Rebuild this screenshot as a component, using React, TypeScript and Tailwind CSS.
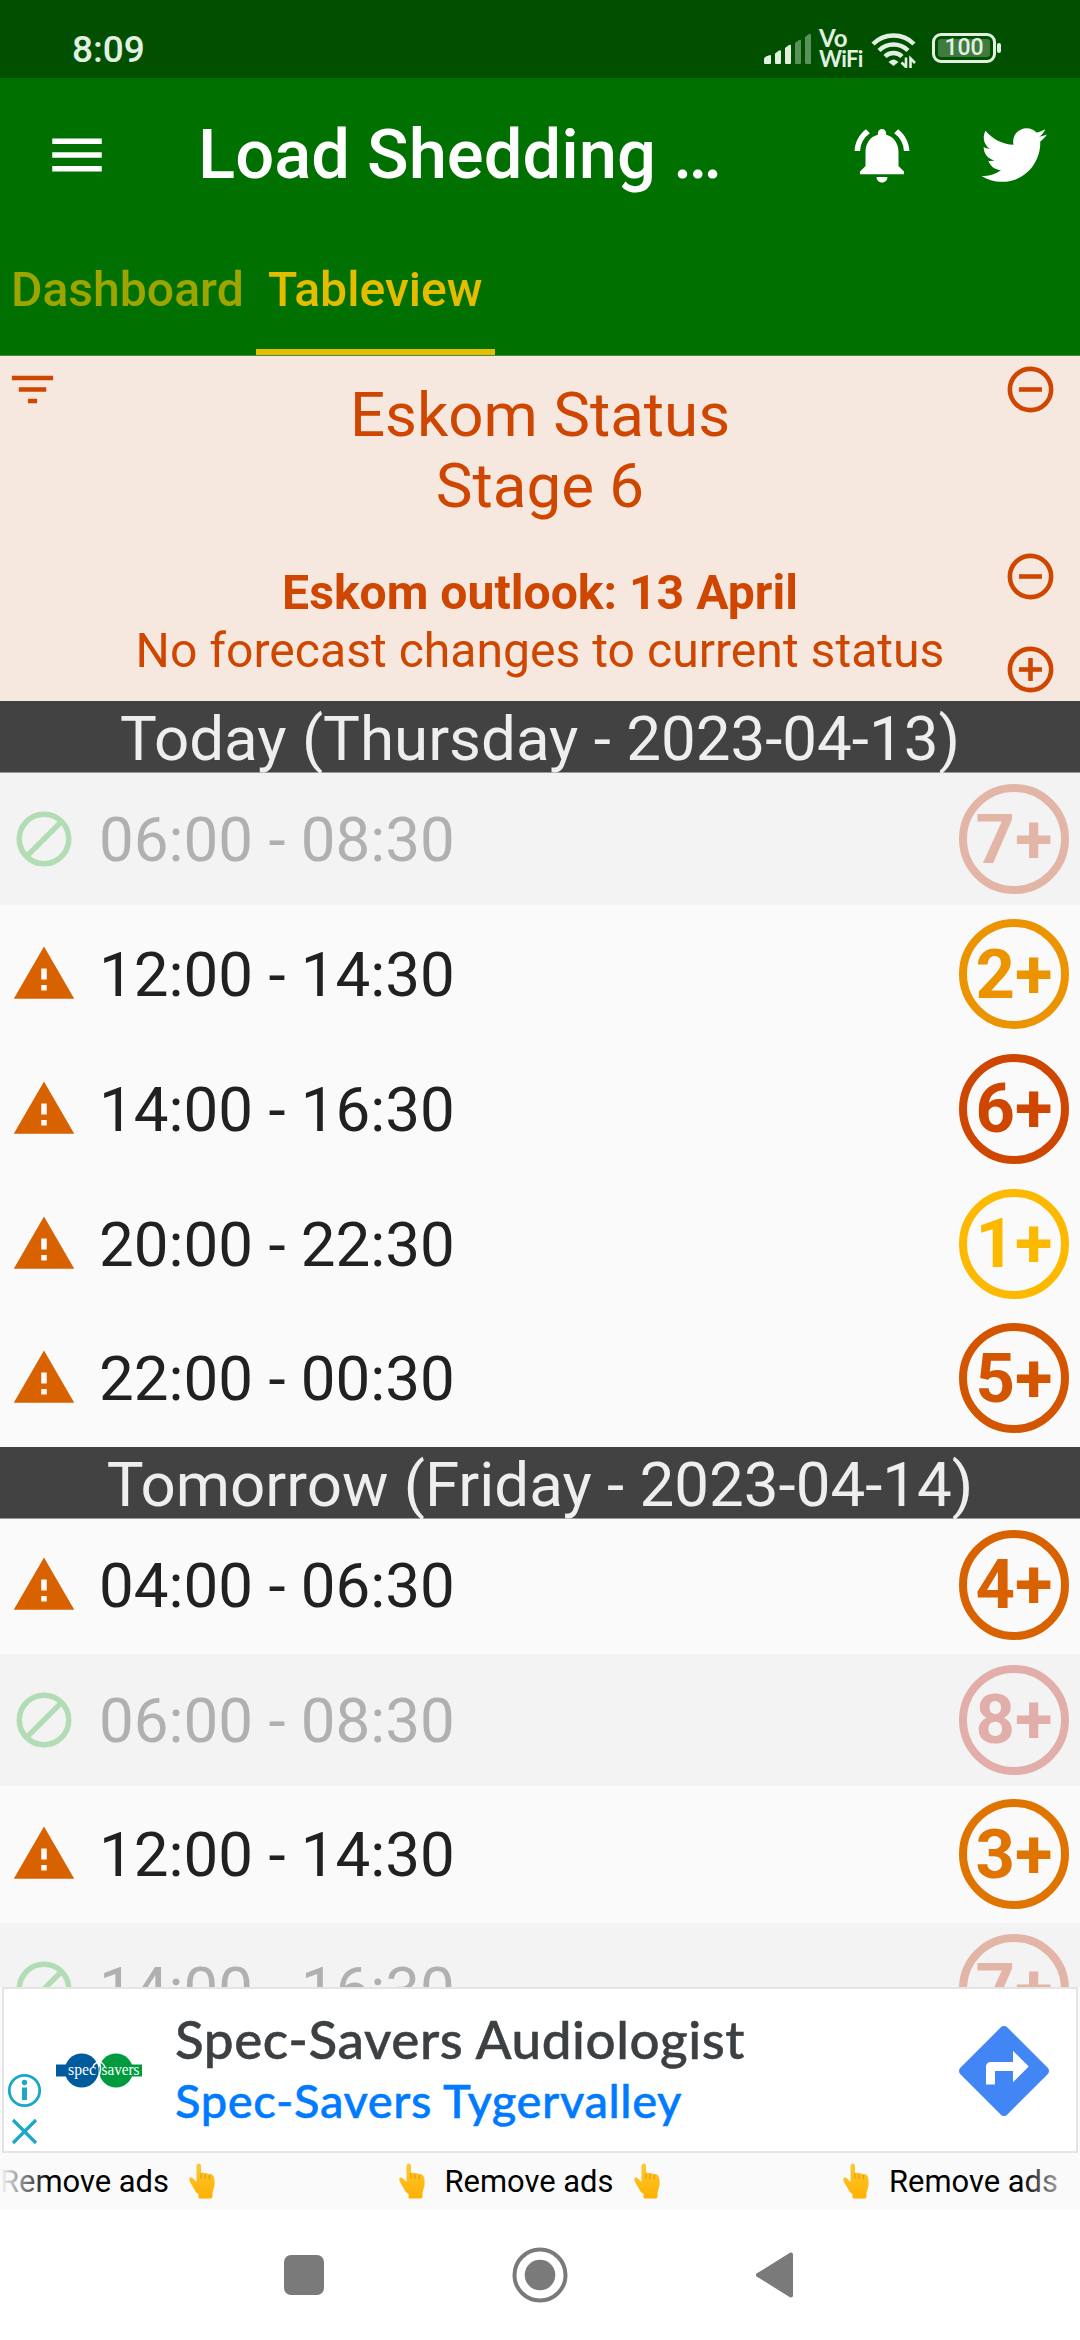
import { FaTwitter } from "react-icons/fa";
import { MdMenu, MdNotificationsActive } from "react-icons/md";

type Slot = {
    time: string;
    stage: string;
    color: string;
    active: boolean;
};

const today: Slot[] = [
    { time: "06:00 - 08:30", stage: "7+", color: "border-[#e3b5a6] text-[#e3b5a6]", active: false },
    { time: "12:00 - 14:30", stage: "2+", color: "border-[#eb9400] text-[#eb9400]", active: true },
    { time: "14:00 - 16:30", stage: "6+", color: "border-[#ce4600] text-[#ce4600]", active: true },
    { time: "20:00 - 22:30", stage: "1+", color: "border-[#fdb900] text-[#fdb900]", active: true },
    { time: "22:00 - 00:30", stage: "5+", color: "border-[#d35500] text-[#d35500]", active: true },
];

const tomorrow: Slot[] = [
    { time: "04:00 - 06:30", stage: "4+", color: "border-[#d96200] text-[#d96200]", active: true },
    { time: "06:00 - 08:30", stage: "8+", color: "border-[#e2aea9] text-[#e2aea9]", active: false },
    { time: "12:00 - 14:30", stage: "3+", color: "border-[#e07400] text-[#e07400]", active: true },
    { time: "14:00 - 16:30", stage: "7+", color: "border-[#e3b5a6] text-[#e3b5a6]", active: false },
];

function StatusBar() {
    return (
        <div className="h-[78px] bg-[#005000] flex items-start text-[#e2f0e2]">
            <span className="ml-[72px] mt-[28px] text-[37px] leading-[44px] font-medium">8:09</span>
            <svg className="ml-auto mt-[30px]" width="50" height="36" viewBox="0 0 50 36" fill="currentColor">
                <path d="M1 29q0-1.500 2-2.500l4-1.500q1 0 1 1v7q0 1-1 1H2q-1 0-1-1z" />
                <path d="M12 23.500l4-3q2-.8 2 1V33q0 1-1 1h-4q-1 0-1-1z" />
                <path d="M22 18l4-3q2-.8 2 1v17q0 1-1 1h-4q-1 0-1-1z" />
                <g opacity=".4">
                    <path d="M32 13l4-3q2-.8 2 1v22q0 1-1 1h-4q-1 0-1-1z" />
                    <path d="M42 7l4-3q2-.8 2 1v28q0 1-1 1h-4q-1 0-1-1z" />
                </g>
            </svg>
            <div className="ml-[6px] mt-[27px] w-[42px] font-['Lato'] font-bold">
                <div className="text-[24px] leading-[21px]">Vo</div>
                <div className="text-[22px] leading-[21px] tracking-[-0.7px]">WiFi</div>
            </div>
            <svg className="ml-[9px] mt-[30px]" width="50" height="38" viewBox="0 0 50 38" fill="none" stroke="currentColor" strokeWidth="4.400">
                <path d="M3 14a29 29 0 0 1 41 0" />
                <path d="M9 20.500a20.500 20.500 0 0 1 29 0" />
                <path d="M15 26.500a12 12 0 0 1 17 0" />
                <path d="M18.500 32q5-5 10 0l-5 4z" fill="currentColor" stroke="none" />
                <path d="M36 27.500v9.500l-4.500-4.500M40.500 38v-9.500l4.500 4.500" strokeWidth="2.600" />
            </svg>
            <div className="ml-[12px] mt-[33px] w-[64px] h-[30px] border-[3px] border-current rounded-[9px] p-[3px]">
                <div className="h-full rounded-[3px] bg-[#3f7b3f] flex items-center justify-center text-[23px] font-medium">100</div>
            </div>
            <div className="ml-[1px] mt-[43px] mr-[79px] w-[4px] h-[10px] rounded-[2px] bg-current" />
        </div>
    );
}

function Header() {
    return (
        <div className="h-[278px] bg-[#007000] border-b border-[#3f8f3c] flex flex-col">
            <div className="h-[154px] flex items-center text-white">
                <MdMenu size={66} className="ml-[44px]" />
                <div className="ml-[88px] w-[651px] text-[68.75px] font-medium whitespace-nowrap">Load Shedding …</div>
                <MdNotificationsActive size={66} />
                <FaTwitter size={66} className="ml-[66px]" />
            </div>
            <div className="flex-1 flex text-[48.125px] font-medium">
                <div className="w-[256px] pl-[11px] text-[#9fa500] flex items-center pb-[7px]">Dashboard</div>
                <div className="w-[239px] pl-[12px] text-[#e5bc00] flex items-center border-b-[6px] border-[#e5bc00] pb-px">Tableview</div>
            </div>
        </div>
    );
}

function CircleIcon({ plus = false, className = "" }: { plus?: boolean; className?: string }) {
    return (
        <svg className={className} width="55" height="55" viewBox="0 0 24 24" fill="none" stroke="currentColor" strokeWidth="2">
            <circle cx="12" cy="12" r="9" />
            <path d="M7 12h10" />
            {plus && <path d="M12 7v10" />}
        </svg>
    );
}

function EskomStatus() {
    return (
        <div className="h-[346px] bg-[#f6e7df] text-[#ce4600] flex justify-between">
            <div className="w-[77px] pl-[5px] pt-[6px]">
                <svg width="55" height="55" viewBox="0 0 24 24" fill="currentColor">
                    <path d="M10 18h4v-2h-4v2zM3 6v2h18V6H3zm3 7h12v-2H6v2z" />
                </svg>
            </div>
            <div className="text-center pt-[24px] whitespace-nowrap">
                <div className="text-[61.875px] leading-[71px]">Eskom Status</div>
                <div className="text-[61.875px] leading-[71px]">Stage 6</div>
                <div className="mt-[42px] text-[48.125px] leading-[58px] font-bold">Eskom outlook: 13 April</div>
                <div className="text-[48.125px] leading-[58px]">No forecast changes to current status</div>
            </div>
            <div className="w-[77px] flex flex-col pt-[6px]">
                <CircleIcon />
                <CircleIcon className="mt-[132px]" />
                <CircleIcon plus className="mt-[38px]" />
            </div>
        </div>
    );
}

function DayHeading({ children }: { children: React.ReactNode }) {
    return (
        <div className="h-[72px] bg-[#424242] border-b border-[#999] text-[#eee] text-[61.875px] leading-[76px] text-center whitespace-nowrap">
            {children}
        </div>
    );
}

function SlotRow({ slot }: { slot: Slot }) {
    return (
        <div className="h-[134.7px] shrink-0">
            <div className={`h-[132px] flex items-center px-[11px] ${slot.active ? "text-[#212121]" : "bg-[#f3f3f3] text-[#b0b0b0]"}`}>
                <svg
                    width="66"
                    height="66"
                    viewBox="0 0 24 24"
                    className={slot.active ? "text-[#d96200]" : "text-[#b2dcb4]"}
                >
                    {slot.active ? (
                        <path fill="currentColor" d="M1 21h22L12 2 1 21zm12-3h-2v-2h2v2zm0-4h-2v-4h2v4z" />
                    ) : (
                        <g fill="none" stroke="currentColor" strokeWidth="2">
                            <circle cx="12" cy="12" r="9" />
                            <path d="M5.600 18.400L18.400 5.600" />
                        </g>
                    )}
                </svg>
                <span className="ml-[22px] mt-[2px] text-[61.875px] leading-[72px]">{slot.time}</span>
                <div className={`ml-auto w-[110px] h-[110px] rounded-full border-[8px] flex items-center justify-center text-[68.75px] font-bold ${slot.color}`}>
                    {slot.stage}
                </div>
            </div>
        </div>
    );
}

function AdBanner() {
    return (
        <div className="mx-[2px] h-[166px] shrink-0 bg-white border-2 border-[#e3e4e3] flex">
            <div className="w-[50px] pt-[84px] pl-[3px] text-[#1ba8c8]">
                <svg width="36" height="72" viewBox="0 0 36 72" fill="none" stroke="currentColor" strokeWidth="2.800">
                    <circle cx="17.500" cy="17.500" r="15.200" />
                    <circle cx="17.500" cy="9.500" r="2.700" fill="currentColor" stroke="none" />
                    <path d="M17.500 14.500v12.500" strokeWidth="5" />
                    <path d="M6 47l23 23M29 47L6 70" strokeWidth="3.200" />
                </svg>
            </div>
            <svg className="mt-[62px] ml-[2px]" width="86" height="40" viewBox="0 0 86 40">
                <path fill="#005a9e" d="M0 13.500h12v12H0z" />
                <path fill="#009b3e" d="M74 13.500h12v12H74z" />
                <circle cx="25.700" cy="19.500" r="17" fill="#005a9e" />
                <circle cx="60" cy="19.500" r="17" fill="#009b3e" />
                <path d="M37 16q2-5 5.500-4t1 12M43 12q3-2 6 4" fill="none" stroke="#fff" strokeWidth="1.500" />
                <text x="12" y="24" fontSize="16" textLength="28" lengthAdjust="spacingAndGlyphs" fill="#fff" fontFamily="Liberation Serif, serif">spec</text>
                <text x="45.500" y="24" fontSize="16" textLength="38" lengthAdjust="spacingAndGlyphs" fill="#fff" fontFamily="Liberation Serif, serif">savers</text>
            </svg>
            <div className="ml-[33px] pt-[19px] font-['Lato'] font-medium whitespace-nowrap">
                <div className="text-[53px] leading-[62px] tracking-[0.55px] text-[#3c4043] [-webkit-text-stroke:0.5px_currentColor]">Spec-Savers Audiologist</div>
                <div className="mt-[2px] text-[47px] leading-[56px] tracking-[0.6px] text-[#007bff] [-webkit-text-stroke:0.5px_currentColor]">Spec-Savers Tygervalley</div>
            </div>
            <svg className="ml-auto mr-[18px] mt-[28px]" width="108" height="108" viewBox="0 0 24 24" fill="#4285f4">
                <path d="M21.710 11.290l-9-9a.996.996 0 0 0-1.410 0l-9 9a.996.996 0 0 0 0 1.410l9 9c.39.39 1.020.39 1.410 0l9-9a.996.996 0 0 0 0-1.410zM14 14.500V12h-4v3H8v-4c0-.55.45-1 1-1h5V7.500l3.500 3.500-3.500 3.500z" />
            </svg>
        </div>
    );
}

function Finger({ className = "" }: { className?: string }) {
    return (
        <svg className={`shrink-0 ${className}`} width="26" height="36" viewBox="0 0 26 36">
            <defs>
                <linearGradient id="skin" x1="0" y1="0" x2="0" y2="1">
                    <stop offset="0" stopColor="#fcc934" />
                    <stop offset="1" stopColor="#ffb000" />
                </linearGradient>
            </defs>
            <path
                fill="url(#skin)"
                d="M7.500 3Q7.500.5 9.800.5T12 3v7Q14 9 16 10.500q2.500-.8 4 .8 3-.8 4.500 1.700 1.500 3 1 9.500l-2 7v4q0 2-1.800 2H11q-1.500 0-1.500-1.500V31Q6 29 4.500 25L.8 18.500Q-.5 15 1.500 14.500 3.500 14 5.500 17l2 2z"
            />
            <path d="M12 10v5.500M16 10.500v5.500M20.300 11.800v4.500" fill="none" stroke="#e59600" strokeWidth="1" />
        </svg>
    );
}

function RemoveAds() {
    return (
        <div className="relative h-[57px] shrink-0 bg-[#fafafa] overflow-hidden flex items-center text-[30.9px] text-black whitespace-nowrap">
            {[0, 1, 2].map((i) => (
                <div key={i} className="w-[444.500px] shrink-0 flex items-center -ml-[46px] mr-[46px]">
                    <Finger />
                    <span className="ml-[20px] mt-px w-[167px]">Remove ads</span>
                    <Finger className="ml-[22px]" />
                </div>
            ))}
            {/* marquee fades out at both edges */}
            <div className="absolute left-0 inset-y-0 w-[50px] bg-gradient-to-r from-[#fafafa] to-[#fafafa]/0" />
            <div className="absolute right-0 inset-y-0 w-[60px] bg-gradient-to-l from-[#fafafa] to-[#fafafa]/0" />
        </div>
    );
}

function NavBar() {
    return (
        <div className="h-[130px] shrink-0 bg-white text-[#7a7a7a] flex items-center">
            <div className="ml-[284px] w-[40px] h-[40px] rounded-[7px] bg-current" />
            <svg className="ml-[188px]" width="56" height="56" viewBox="0 0 56 56">
                <circle cx="28" cy="28" r="25.500" fill="none" stroke="currentColor" strokeWidth="4" />
                <circle cx="28" cy="28" r="15.300" fill="currentColor" />
            </svg>
            <svg className="ml-[187px]" width="40" height="48" viewBox="0 0 40 48">
                <path d="M3 24L36 3.500v41z" fill="currentColor" stroke="currentColor" strokeWidth="4" strokeLinejoin="round" />
            </svg>
        </div>
    );
}

export default function App() {
    return (
        <div className="w-[1080px] h-[2340px] overflow-hidden flex flex-col bg-[#fafafa] font-['Roboto',sans-serif]">
            <StatusBar />
            <Header />
            <EskomStatus />
            <div className="h-[1285.500px] shrink-0 overflow-hidden">
                <DayHeading>Today (Thursday - 2023-04-13)</DayHeading>
                {today.map((slot) => (
                    <SlotRow key={slot.time} slot={slot} />
                ))}
                <DayHeading>Tomorrow (Friday - 2023-04-14)</DayHeading>
                {tomorrow.map((slot) => (
                    <SlotRow key={slot.time} slot={slot} />
                ))}
            </div>
            <AdBanner />
            <RemoveAds />
            <NavBar />
        </div>
    );
}
